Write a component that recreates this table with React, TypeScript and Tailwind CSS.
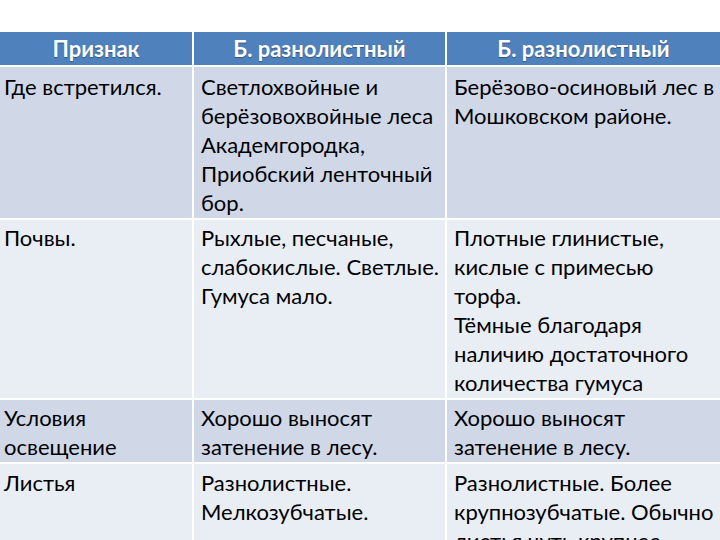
const rows = [
  {
    bg: "bg-[#d0d8e8]",
    pad: "pt-[5px]",
    a: ["Где встретился."],
    b: ["Светлохвойные и", "берёзовохвойные леса", "Академгородка,", "Приобский ленточный", "бор."],
    c: ["Берёзово-осиновый лес в", "Мошковском районе."],
  },
  {
    bg: "bg-[#e9edf4]",
    pad: "pt-[3px]",
    a: ["Почвы."],
    b: ["Рыхлые, песчаные,", "слабокислые. Светлые.", "Гумуса мало."],
    c: [
      "Плотные глинистые,",
      "кислые с примесью",
      "торфа.",
      "Тёмные благодаря",
      "наличию достаточного",
      "количества гумуса",
    ],
  },
  {
    bg: "bg-[#d0d8e8]",
    pad: "pt-[3px]",
    a: ["Условия", "освещение"],
    b: ["Хорошо выносят", "затенение в лесу."],
    c: ["Хорошо выносят", "затенение в лесу."],
  },
  {
    bg: "bg-[#e9edf4]",
    pad: "pt-[4px]",
    a: ["Листья"],
    b: ["Разнолистные.", "Мелкозубчатые."],
    c: ["Разнолистные. Более", "крупнозубчатые. Обычно", "листья чуть крупнее"],
  },
];

function Cell({ lines, bg, pad, first }: { lines: string[]; bg: string; pad: string; first?: boolean }) {
  return (
    <div className={`${bg} ${pad} ${first ? "pl-[4px]" : "pl-[7px]"} overflow-hidden`}>
      {lines.map((l, i) => (
        <div key={i} className="whitespace-nowrap leading-[29px]">
          {l}
        </div>
      ))}
    </div>
  );
}

export default function App() {
  return (
    <div className="h-[540px] w-[720px] overflow-hidden bg-white pt-8 font-['Lato',sans-serif] text-[22px] text-black">
      <div className="grid grid-cols-[192px_251px_273px] grid-rows-[33px_151px_178px_62px_90px] gap-x-[2px] gap-y-[2px] bg-white">
        {["Признак", "Б. разнолистный", "Б. разнолистный"].map((h, i) => (
          <div
            key={i}
            className="flex items-center justify-center bg-[#4f81bd] text-[22px] font-bold text-white [text-shadow:0_1px_1px_rgba(0,0,0,0.35)]"
          >
            {h}
          </div>
        ))}
        {rows.map((r, i) => (
          <div key={i} className="contents">
            <Cell lines={r.a} bg={r.bg} pad={r.pad} first />
            <Cell lines={r.b} bg={r.bg} pad={r.pad} />
            <Cell lines={r.c} bg={r.bg} pad={r.pad} />
          </div>
        ))}
      </div>
    </div>
  );
}
